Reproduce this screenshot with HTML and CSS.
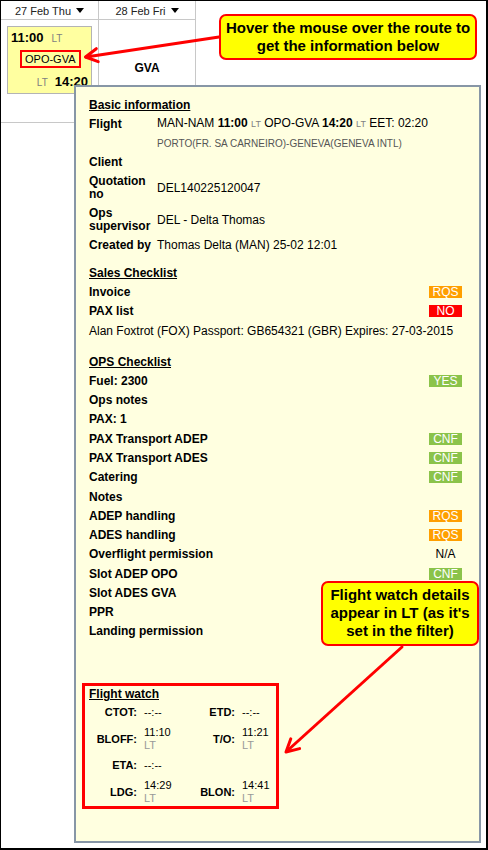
FILE: index.html
```html
<!DOCTYPE html>
<html lang="en">
<head>
  <meta charset="UTF-8">
  <meta name="viewport" content="width=device-width, initial-scale=1.0">
  <title>Schedule - flight details</title>
  <link rel="stylesheet" href="styles.css">
</head>
<body>
  <div class="screen">
    <div class="calendar">
      <div class="day">
        <div class="day-head">27 Feb Thu <span class="caret"></span></div>
        <div class="day-body">
          <div class="event">
            <div class="event-time"><b>11:00</b><span class="lt">LT</span></div>
            <div class="event-route"><span class="route">OPO-GVA</span></div>
            <div class="event-time event-time--end"><span class="lt">LT</span><b>14:20</b></div>
          </div>
        </div>
      </div>
      <div class="day">
        <div class="day-head">28 Feb Fri <span class="caret"></span></div>
        <div class="day-body day-body--center"><b>GVA</b></div>
      </div>
    </div>

    <div class="tooltip">
      <div class="section-title">Basic information</div>
      <div class="info-row">
        <div class="info-label">Flight</div>
        <div class="info-value">MAN-NAM <b>11:00</b> <span class="lt">LT</span> OPO-GVA <b>14:20</b> <span class="lt">LT</span> EET: 02:20</div>
      </div>
      <div class="info-row">
        <div class="info-label"></div>
        <div class="info-value airports">PORTO(FR. SA CARNEIRO)-GENEVA(GENEVA INTL)</div>
      </div>
      <div class="info-row">
        <div class="info-label">Client</div>
        <div class="info-value"></div>
      </div>
      <div class="info-row">
        <div class="info-label">Quotation no</div>
        <div class="info-value">DEL140225120047</div>
      </div>
      <div class="info-row">
        <div class="info-label">Ops supervisor</div>
        <div class="info-value">DEL - Delta Thomas</div>
      </div>
      <div class="info-row">
        <div class="info-label">Created by</div>
        <div class="info-value">Thomas Delta (MAN) 25-02 12:01</div>
      </div>

      <div class="section-title section-title--gap">Sales Checklist</div>
      <div class="check-row"><span class="check-label">Invoice</span><span class="badge badge--rqs">RQS</span></div>
      <div class="check-row"><span class="check-label">PAX list</span><span class="badge badge--no">NO</span></div>
      <div class="check-row pax-note">Alan Foxtrot (FOX) Passport: GB654321 (GBR) Expires: 27-03-2015</div>

      <div class="section-title section-title--gap-lg">OPS Checklist</div>
      <div class="check-row"><span class="check-label">Fuel: 2300</span><span class="badge badge--ok">YES</span></div>
      <div class="check-row"><span class="check-label">Ops notes</span></div>
      <div class="check-row"><span class="check-label">PAX: 1</span></div>
      <div class="check-row"><span class="check-label">PAX Transport ADEP</span><span class="badge badge--ok">CNF</span></div>
      <div class="check-row"><span class="check-label">PAX Transport ADES</span><span class="badge badge--ok">CNF</span></div>
      <div class="check-row"><span class="check-label">Catering</span><span class="badge badge--ok">CNF</span></div>
      <div class="check-row"><span class="check-label">Notes</span></div>
      <div class="check-row"><span class="check-label">ADEP handling</span><span class="badge badge--rqs">RQS</span></div>
      <div class="check-row"><span class="check-label">ADES handling</span><span class="badge badge--rqs">RQS</span></div>
      <div class="check-row"><span class="check-label">Overflight permission</span><span class="badge badge--na">N/A</span></div>
      <div class="check-row"><span class="check-label">Slot ADEP OPO</span><span class="badge badge--ok">CNF</span></div>
      <div class="check-row"><span class="check-label">Slot ADES GVA</span></div>
      <div class="check-row"><span class="check-label">PPR</span></div>
      <div class="check-row"><span class="check-label">Landing permission</span></div>

      <div class="flight-watch">
        <div class="section-title fw-title">Flight watch</div>
        <div class="fw-grid">
          <div class="fw-label">CTOT:</div>
          <div class="fw-value">--:--</div>
          <div class="fw-label">ETD:</div>
          <div class="fw-value">--:--</div>

          <div class="fw-label">BLOFF:</div>
          <div class="fw-value">11:10<div class="fw-unit">LT</div></div>
          <div class="fw-label">T/O:</div>
          <div class="fw-value">11:21<div class="fw-unit">LT</div></div>

          <div class="fw-label">ETA:</div>
          <div class="fw-value">--:--</div>
          <div></div>
          <div></div>

          <div class="fw-label">LDG:</div>
          <div class="fw-value">14:29<div class="fw-unit">LT</div></div>
          <div class="fw-label">BLON:</div>
          <div class="fw-value">14:41<div class="fw-unit">LT</div></div>
        </div>
      </div>
    </div>

    <div class="callout callout--route">Hover the mouse over the route to<br>get the information below</div>
    <div class="callout callout--watch">Flight watch details<br>appear in LT (as it's<br>set in the filter)</div>

    <svg class="arrows" width="488" height="850" viewBox="0 0 488 850">
      <g fill="none" stroke="#f00" stroke-width="3" stroke-linecap="round" stroke-linejoin="round">
        <line x1="219" y1="37" x2="86" y2="57"/>
        <polyline points="96.3,48.7 85.5,57 98.2,61.7"/>
        <line x1="402" y1="647" x2="287" y2="751"/>
        <polyline points="290.8,738.8 286,752 299.6,748.6"/>
      </g>
    </svg>
  </div>
</body>
</html>
```

FILE: styles.css
```css
:root {
  --ink: #000;
  --muted: #808080;
  --grid-line: #c8c8c8;
  --tip-bg: #ffffe0;
  --tip-border: #8796a6;
  --red: #f00;
  --rqs: #ff9f00;
  --ok: #8bc34a;
}

body {
  margin: 0;
  font-family: "Liberation Sans", Arial, sans-serif;
  font-size: 12px;
  color: var(--ink);
  background: #fff;
}

.screen {
  position: relative;
  width: 488px;
  height: 850px;
  box-sizing: border-box;
  border: 1px solid #000;
  border-right-width: 2px;
  border-bottom-width: 2px;
  overflow: hidden;
}

/* calendar grid */
.calendar {
  display: grid;
  grid-template-columns: 98px 97px;
}

.day {
  border-right: 1px solid var(--grid-line);
}

.day-head {
  height: 19px;
  border-bottom: 1px solid var(--grid-line);
  display: flex;
  align-items: center;
  justify-content: center;
  gap: 5px;
  font-size: 11px;
  color: #222;
  padding-top: 1px;
  box-sizing: border-box;
}

.caret {
  width: 0;
  height: 0;
  border-left: 4px solid transparent;
  border-right: 4px solid transparent;
  border-top: 5px solid #000;
}

.day-body {
  height: 96px;
  border-bottom: 1px solid var(--grid-line);
}

.day-body--center {
  display: flex;
  align-items: center;
  justify-content: center;
}

.event {
  margin: 6px 0 0 6px;
  width: 85px;
  height: 68px;
  box-sizing: border-box;
  border: 1px solid #b4b4b4;
  background: #ffffa0;
  padding: 3px;
}

.event-time {
  line-height: 16px;
  display: flex;
  align-items: baseline;
  gap: 8px;
}

.event-time b {
  font-size: 13px;
}

.event-time--end {
  justify-content: flex-end;
  margin-top: 6px;
  gap: 7px;
}

.event-route {
  margin: 3px 0 0 9px;
}

.route {
  display: inline-block;
  border: 2px solid var(--red);
  padding: 0 3px;
  font-size: 11px;
  line-height: 14px;
}

.lt {
  font-size: 9px;
  color: var(--muted);
}

.event .lt {
  font-size: 10px;
}

/* hover card */
.tooltip {
  position: absolute;
  left: 73px;
  top: 84px;
  width: 407px;
  height: 758px;
  box-sizing: border-box;
  background: var(--tip-bg);
  border: 2px solid var(--tip-border);
  padding: 8px 17px 0 13px;
}

.section-title {
  font-weight: bold;
  text-decoration: underline;
  line-height: 14px;
  padding: 2.65px 0;
}

.section-title--gap {
  margin-top: 8px;
}

.section-title--gap-lg {
  margin-top: 11.5px;
}

.info-row {
  display: flex;
  align-items: center;
  padding: 3px 0;
  line-height: 13px;
}

.info-label {
  width: 68px;
  flex-shrink: 0;
  font-weight: bold;
}

.airports {
  font-size: 10px;
  color: #555;
}

.check-row {
  display: flex;
  align-items: center;
  justify-content: space-between;
  line-height: 14px;
  padding: 2.65px 0;
}

.check-label {
  font-weight: bold;
}

.badge {
  display: inline-block;
  width: 33px;
  height: 12px;
  line-height: 12px;
  text-align: center;
  color: #fff;
}

.badge--rqs { background: var(--rqs); }
.badge--no { background: var(--red); }
.badge--ok { background: var(--ok); }
.badge--na { color: var(--ink); }

/* flight watch block */
.flight-watch {
  margin: 42px 0 0 -7px;
  width: 197px;
  box-sizing: border-box;
  border: 3px solid var(--red);
  padding: 1px 4px 1px 4px;
}

.fw-title {
  padding: 0;
  margin-bottom: 5px;
}

.fw-grid {
  display: grid;
  grid-template-columns: 55px 46px 52px auto;
  row-gap: 7px;
  align-items: center;
  font-size: 11px;
  line-height: 13px;
}

.fw-label {
  font-weight: bold;
  text-align: right;
  padding-right: 7px;
}

.fw-unit {
  color: #999;
}

/* annotations */
.callout {
  position: absolute;
  box-sizing: border-box;
  background: #ff0;
  border: 2px solid var(--red);
  border-radius: 7px;
  font-weight: bold;
  font-size: 15px;
  line-height: 18px;
  text-align: center;
}

.callout--route {
  left: 218px;
  top: 13px;
  width: 258px;
  padding: 3px 0;
}

.callout--watch {
  left: 320px;
  top: 580px;
  width: 158px;
  padding: 3px 0 4px;
}

.arrows {
  position: absolute;
  left: -1px;
  top: -1px;
  pointer-events: none;
}
```
